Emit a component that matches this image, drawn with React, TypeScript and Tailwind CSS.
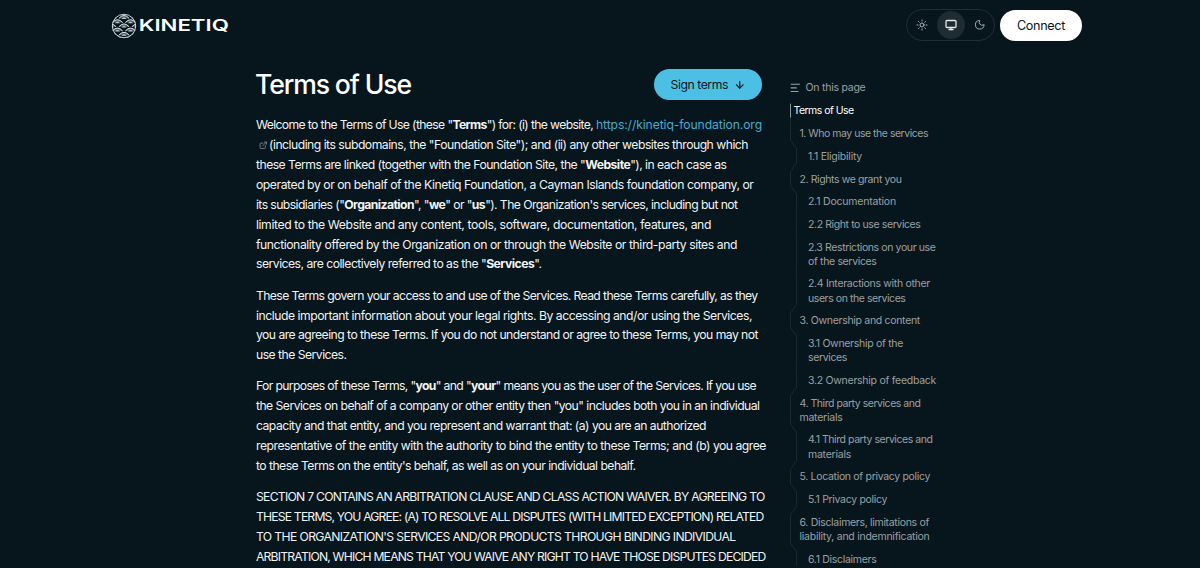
import React, { useLayoutEffect, useRef } from "react";
import { ArrowDown, ExternalLink, Monitor, Moon, Sun } from "lucide-react";

function Fit({ w, className = "", children }: { w: number; className?: string; children: React.ReactNode }) {
  const ref = useRef<HTMLSpanElement>(null);
  useLayoutEffect(() => {
    const el = ref.current;
    if (!el) return;
    el.style.letterSpacing = "0px";
    const n = (el.textContent || "").length;
    el.style.letterSpacing = `${(w - el.getBoundingClientRect().width) / n}px`;
  }, [w]);
  return (
    <span ref={ref} className={`inline-block whitespace-pre ${className}`}>
      {children}
    </span>
  );
}

type Row = [number, React.ReactNode];

const intro: Row[] = [
  [470.5, <>these Terms are linked (together with the Foundation Site, the "<b>Website</b>"), in each case as</>],
  [497.5, <>operated by or on behalf of the Kinetiq Foundation, a Cayman Islands foundation company, or</>],
  [481.5, <>its subsidiaries ("<b>Organization</b>", "<b>we</b>" or "<b>us</b>"). The Organization's services, including but not</>],
  [455, <>limited to the Website and any content, tools, software, documentation, features, and</>],
  [481, <>functionality offered by the Organization on or through the Website or third-party sites and</>],
  [285.5, <>services, are collectively referred to as the "<b>Services</b>".</>],
];

const paragraphs: Row[][] = [
  [
    [501.5, "These Terms govern your access to and use of the Services. Read these Terms carefully, as they"],
    [496, "include important information about your legal rights. By accessing and/or using the Services,"],
    [502, "you are agreeing to these Terms. If you do not understand or agree to these Terms, you may not"],
    [90.5, "use the Services."],
  ],
  [
    [500, <>For purposes of these Terms, "<b>you</b>" and "<b>your</b>" means you as the user of the Services. If you use</>],
    [503.5, `the Services on behalf of a company or other entity then "you" includes both you in an individual`],
    [450, "capacity and that entity, and you represent and warrant that: (a) you are an authorized"],
    [510, "representative of the entity with the authority to bind the entity to these Terms; and (b) you agree"],
    [379.5, "to these Terms on the entity's behalf, as well as on your individual behalf."],
  ],
  [
    [508.5, "SECTION 7 CONTAINS AN ARBITRATION CLAUSE AND CLASS ACTION WAIVER. BY AGREEING TO"],
    [507.5, "THESE TERMS, YOU AGREE: (A) TO RESOLVE ALL DISPUTES (WITH LIMITED EXCEPTION) RELATED"],
    [479.5, "TO THE ORGANIZATION'S SERVICES AND/OR PRODUCTS THROUGH BINDING INDIVIDUAL"],
    [509.5, "ARBITRATION, WHICH MEANS THAT YOU WAIVE ANY RIGHT TO HAVE THOSE DISPUTES DECIDED"],
  ],
];

type TocItem = { level: 1 | 2 | 3; lines: [number, string][] };

const toc: TocItem[] = [
  { level: 1, lines: [[60, "Terms of Use"]] },
  { level: 2, lines: [[128.5, "1. Who may use the services"]] },
  { level: 3, lines: [[54, "1.1 Eligibility"]] },
  { level: 2, lines: [[102, "2. Rights we grant you"]] },
  { level: 3, lines: [[88, "2.1 Documentation"]] },
  { level: 3, lines: [[112.5, "2.2 Right to use services"]] },
  { level: 3, lines: [[127.5, "2.3 Restrictions on your use"], [68.5, "of the services"]] },
  { level: 3, lines: [[122, "2.4 Interactions with other"], [97.5, "users on the services"]] },
  { level: 2, lines: [[120.5, "3. Ownership and content"]] },
  { level: 3, lines: [[95, "3.1 Ownership of the"], [39, "services"]] },
  { level: 3, lines: [[128, "3.2 Ownership of feedback"]] },
  { level: 2, lines: [[121, "4. Third party services and"], [43, "materials"]] },
  { level: 3, lines: [[124.5, "4.1 Third party services and"], [43, "materials"]] },
  { level: 2, lines: [[130.5, "5. Location of privacy policy"]] },
  { level: 3, lines: [[79, "5.1 Privacy policy"]] },
  { level: 2, lines: [[129.5, "6. Disclaimers, limitations of"], [130, "liability, and indemnification"]] },
  { level: 3, lines: [[68.5, "6.1 Disclaimers"]] },
];

const LINE = 14.2;
const PAD = 4.25;

function railPath() {
  let y = 0;
  let d = "";
  toc.forEach((item) => {
    const x = item.level === 3 ? 6.5 : 0.5;
    const h = item.lines.length * LINE + PAD * 2;
    d += `${d ? "L" : "M"}${x} ${y + PAD}L${x} ${y + h - PAD}`;
    y += h;
  });
  return d;
}

function Toc() {
  return (
    <nav className="relative mt-[3.2px]">
      <svg className="absolute left-0 top-0" width="8" height="480" fill="none">
        <path d={railPath()} stroke="#1a292f" />
        <path d={`M0.5 ${PAD + 0.5}V${PAD + LINE}`} stroke="#8c969a" />
      </svg>
      {toc.map((item, i) => (
        <div
          key={i}
          className={`pb-[3.25px] pt-[5.25px] text-[10.5px] leading-[14.2px] ${
            item.level === 1 ? "pl-[3.5px] text-white" : item.level === 2 ? "pl-[9.5px] text-[#9ba0a3]" : "pl-[18px] text-[#9ba0a3]"
          }`}
        >
          {item.lines.map(([w, t], j) => (
            <div key={j} className="h-[14.2px]">
              <Fit w={w}>{t}</Fit>
            </div>
          ))}
        </div>
      ))}
    </nav>
  );
}

const scallops = [0, 1, 2, 3, 4, 5].flatMap((row) =>
  [-1, 0, 1].map((col) => ({ cx: 13 + col * 13 + (row % 2 ? 6.5 : 0), cy: 4.8 + row * 4.2 })),
);

function Logo() {
  return (
    <div className="flex items-center pt-px" aria-label="Kinetiq">
      <svg width="26" height="26" viewBox="0 0 26 26">
        <clipPath id="disc">
          <circle cx="13" cy="13" r="12" />
        </clipPath>
        <g clipPath="url(#disc)">
          <rect width="26" height="26" fill="#07161d" />
          {scallops.map(({ cx, cy }, i) => (
            <g key={i}>
              <path d={`M${cx - 6.6} ${cy + 1.6}Q${cx} ${cy - 7} ${cx + 6.6} ${cy + 1.6}Z`} fill="#07161d" />
              <path
                d={`M${cx - 5.2} ${cy + 0.6}Q${cx} ${cy - 5.2} ${cx + 5.2} ${cy + 0.6}`}
                fill="#56656d"
                stroke="#dfe6e9"
                strokeWidth="1"
              />
              <path d={`M${cx - 2.6} ${cy + 1.2}Q${cx} ${cy - 1.8} ${cx + 2.6} ${cy + 1.2}Z`} fill="#c3ccd0" />
            </g>
          ))}
        </g>
        <circle cx="13" cy="13" r="11.7" fill="none" stroke="#dfe6e9" strokeWidth="0.9" />
      </svg>
      <svg width="94" height="26" viewBox="0 0 94 26" className="ml-px">
        <text
          x="0.8"
          y="18"
          textLength="90"
          lengthAdjust="spacingAndGlyphs"
          className="fill-white font-['Inter'] text-[15.4px] font-semibold"
        >
          KINETIQ
        </text>
      </svg>
    </div>
  );
}

export default function App() {
  return (
    <div className="h-[568px] w-[1200px] overflow-hidden bg-[#07161d] font-['Inter',sans-serif] text-white">
      <header className="flex h-[50px] items-center justify-between pl-[110.5px] pr-[118px]">
        <Logo />
        <div className="flex items-center gap-[5px]">
          <div className="flex h-8 w-[89px] items-center justify-between rounded-full border border-[#202e35] pl-px text-[#aab2b6]">
            <span className="flex size-7 items-center justify-center">
              <Sun size={12} strokeWidth={2} />
            </span>
            <span className="flex size-7 items-center justify-center rounded-full bg-[#1e2b32] text-[#e4e8ea]">
              <Monitor size={12} strokeWidth={2.6} />
            </span>
            <span className="flex size-7 items-center justify-center">
              <Moon size={11.5} strokeWidth={2} />
            </span>
          </div>
          <button className="flex h-[31px] w-[82px] items-center justify-center rounded-full bg-white pt-[2px] text-[12.6px] text-[#07161d]">
            <Fit w={48}>Connect</Fit>
          </button>
        </div>
      </header>

      <div className="flex pl-64">
        <main className="w-[512px] shrink-0 pt-[19px]">
          <div className="flex h-[31px] items-center justify-between pr-[6px]">
            <h1 className="-ml-px text-[26.6px] font-medium leading-none">
              <Fit w={156}>Terms of Use</Fit>
            </h1>
            <button className="flex h-[31px] w-[108px] items-center justify-center gap-1.5 rounded-full bg-[#4cc0e4] text-[12.2px] text-[#07161d]">
              <Fit w={57.5} className="pt-[1.5px]">Sign terms</Fit>
              <ArrowDown size={11.5} strokeWidth={2.4} />
            </button>
          </div>

          <div className="mt-[15.6px] flex flex-col gap-[11.4px] text-[12.2px] text-[#f1f3f4] [&_b]:font-bold">
            <div>
              <div className="flex h-[19.86px] items-center">
                <Fit w={340}>Welcome to the Terms of Use (these "<b>Terms</b>") for: (i) the website, </Fit>
                <Fit w={166} className="text-[#45abd0]">https://kinetiq-foundation.org</Fit>
              </div>
              <div className="flex h-[19.86px] items-center pl-[3px]">
                <ExternalLink size={8.5} strokeWidth={2} className="mr-[1.5px] text-[#9aa3a7]" />
                <Fit w={479}>(including its subdomains, the "Foundation Site"); and (ii) any other websites through which</Fit>
              </div>
              {intro.map(([w, t], i) => (
                <div key={i} className="flex h-[19.86px] items-center">
                  <Fit w={w}>{t}</Fit>
                </div>
              ))}
            </div>
            {paragraphs.map((rows, p) => (
              <div key={p}>
                {rows.map(([w, t], i) => (
                  <div key={i} className="flex h-[19.86px] items-center">
                    <Fit w={w}>{t}</Fit>
                  </div>
                ))}
              </div>
            ))}
          </div>
        </main>

        <aside className="ml-[22px] w-[160px] pt-[30px]">
          <div className="flex h-4 items-center gap-[4.5px] text-[10.5px] leading-4 text-[#9ba0a3]">
            <svg width="11" height="10" viewBox="0 0 11 10" fill="none" stroke="currentColor" strokeWidth="1.1">
              <path d="M0.7 1.3H9.9M0.7 4.9H6.7M0.7 8.5H8.5" />
            </svg>
            <Fit w={60}>On this page</Fit>
          </div>
          <Toc />
        </aside>
      </div>
    </div>
  );
}
